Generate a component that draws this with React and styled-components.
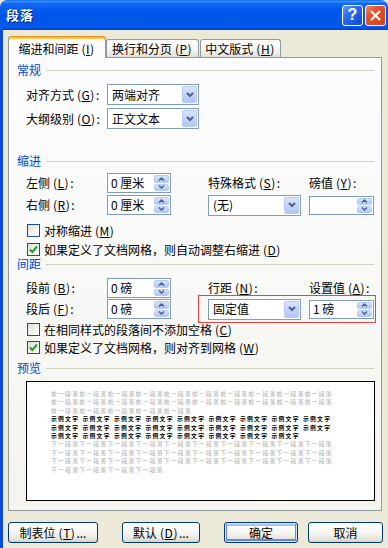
import React from "react";
import styled, { createGlobalStyle } from "styled-components";

const GlobalStyle = createGlobalStyle`
  * { box-sizing: border-box; }
  html, body {
    margin: 0;
    padding: 0;
    background: #ece9d8;
  }
  body {
    font-family: "Noto Sans CJK SC", "Noto Sans", sans-serif;
    font-size: 12px;
    color: #000;
  }
`;

const Window = styled.div`
  width: 388px;
  height: 548px;
  display: flex;
  flex-direction: column;
  overflow: hidden;
`;

const TitleBar = styled.div`
  height: 30px;
  flex-shrink: 0;
  display: flex;
  align-items: center;
  justify-content: space-between;
  padding: 0 2px 0 6px;
  border-radius: 7px 7px 0 0;
  background: linear-gradient(
    180deg,
    #0a5fe6 0%,
    #3d94ff 4%,
    #1168f4 12%,
    #0058ee 35%,
    #0055e6 70%,
    #005bf2 88%,
    #0040c4 100%
  );
`;

const Title = styled.div`
  color: #fff;
  font-weight: bold;
  font-size: 13px;
  line-height: 16px;
  letter-spacing: 1px;
  text-shadow: 1px 1px 0 #0a1883;
`;

const TitleButtons = styled.div`
  display: flex;
  gap: 2px;
`;

const TitleButton = styled.div`
  width: 21px;
  height: 21px;
  border: 1px solid #fff;
  border-radius: 3px;
  display: flex;
  align-items: center;
  justify-content: center;
  color: #fff;
  font-family: "Liberation Sans", sans-serif;
  font-weight: bold;
  font-size: 16px;
  line-height: 1;
  background: ${(p) =>
    p.$close
      ? "linear-gradient(135deg, #f0876a 0%, #e0552f 35%, #c9421c 100%)"
      : "linear-gradient(135deg, #6a9cf8 0%, #2d6df0 35%, #0c48d6 100%)"};
`;

const Body = styled.div`
  flex: 1;
  display: flex;
  flex-direction: column;
  background: #ece9d8;
  border-left: 3px solid #0b4ad8;
  padding: 6px 0 0 5px;
`;

const TabRow = styled.div`
  display: flex;
  align-items: flex-end;
  height: 22px;
  margin-bottom: -1px;
  position: relative;
  z-index: 1;
`;

const Tab = styled.div`
  width: ${(p) => p.$width}px;
  margin-left: ${(p) => p.$ml || 0}px;
  height: ${(p) => (p.$active ? 22 : 18)}px;
  margin-bottom: ${(p) => (p.$active ? 0 : 1)}px;
  display: flex;
  align-items: center;
  justify-content: center;
  line-height: 14px;
  white-space: nowrap;
  border: 1px solid #919b9c;
  border-bottom: none;
  border-radius: 3px 3px 0 0;
  background: ${(p) =>
    p.$active
      ? "#fcfcfe"
      : "linear-gradient(180deg, #ffffff 0%, #f4f4f0 60%, #e4e2d8 100%)"};
  ${(p) =>
    p.$active &&
    `
      border-top: 1px solid #e68b2c;
      box-shadow: inset 0 2px 0 #ffc83c;
      padding-top: 2px;
    `}
`;

const Panel = styled.div`
  position: relative;
  width: 374px;
  height: 454px;
  border: 1px solid #919b9c;
  background: linear-gradient(180deg, #fcfcfe 0%, #f8f8f6 55%, #f4f3ee 100%);
  padding: 0 7px 0 8px;
  display: flex;
  flex-direction: column;
`;

const SectionHeading = styled.div`
  display: flex;
  align-items: center;
  gap: 5px;
  height: 14px;
  line-height: 14px;
  color: #0046d5;
  margin-top: ${(p) => p.$mt}px;

  &::after {
    content: "";
    flex: 1;
    height: 1px;
    background: #d0d0bf;
  }
`;

const FieldGrid = styled.div`
  display: grid;
  grid-template-columns: 81px 101px 101px 64px;
  grid-auto-rows: ${(p) => p.$row}px;
  row-gap: ${(p) => p.$gap}px;
  margin: ${(p) => p.$mt}px 0 0 9px;
  align-items: center;
`;

const Label = styled.div`
  line-height: 20px;
  white-space: nowrap;
  grid-column: ${(p) => p.$col || "auto"};
  grid-row: ${(p) => p.$row || "auto"};
`;

const Paren = styled.span`
  padding: 0 1px 0 3px;
  letter-spacing: 0.5px;

  u {
    text-decoration: underline;
  }
`;

const Mn = ({ k }) => (
  <Paren>
    (<u>{k}</u>)
  </Paren>
);

const Field = styled.div`
  grid-column: ${(p) => p.$col || "auto"};
  grid-row: ${(p) => p.$row || "auto"};
  width: ${(p) => p.$width}px;
  height: ${(p) => p.$height || 20}px;
  border: 1px solid #7f9db9;
  background: #fff;
  display: flex;
  align-items: center;
  padding-left: ${(p) => p.$pad || 4}px;
  line-height: 14px;
  white-space: nowrap;
`;

const FieldText = styled.span`
  flex: 1;
`;

const DropButton = styled.div`
  width: 15px;
  align-self: stretch;
  margin: 1px;
  border-radius: 2px;
  border: 1px solid #b7c9f6;
  background: linear-gradient(180deg, #d9e4fd 0%, #c3d4fc 45%, #b2c7f8 100%);
  display: flex;
  align-items: center;
  justify-content: center;
`;

const SpinBox = styled.div`
  width: 15px;
  align-self: stretch;
  margin: 1px;
  display: flex;
  flex-direction: column;
  gap: 1px;
`;

const SpinHalf = styled.div`
  flex: 1;
  border-radius: 2px;
  border: 1px solid #b7c9f6;
  background: linear-gradient(180deg, #d9e4fd 0%, #c3d4fc 50%, #b2c7f8 100%);
  display: flex;
  align-items: center;
  justify-content: center;
`;

const CheckRow = styled.div`
  display: flex;
  align-items: center;
  gap: 4px;
  height: 13px;
  margin: ${(p) => p.$mt}px 0 0 10px;
  line-height: 13px;
  white-space: nowrap;
`;

const CheckBox = styled.div`
  width: 13px;
  height: 13px;
  flex-shrink: 0;
  border: 1px solid #1c5180;
  background: linear-gradient(135deg, #dcdcd7 0%, #f4f4f1 60%, #ffffff 100%);
  display: flex;
  align-items: center;
  justify-content: center;
`;

const Highlight = styled.div`
  position: absolute;
  left: 189px;
  top: 237px;
  width: 178px;
  height: 28px;
  border: 1px solid #e8413f;
  pointer-events: none;
`;

const Preview = styled.div`
  width: 349px;
  height: 120px;
  margin: 6px 0 0 9px;
  border: 1px solid #000;
  background: #fff;
  padding: 8px 0 0 24px;
  font-size: 5.8px;
  letter-spacing: 1.25px;
  line-height: 8.4px;
`;

const PreviewLine = styled.div`
  white-space: nowrap;
  height: 8.4px;
  color: ${(p) => (p.$sample ? "#000" : "#a9a9a9")};
  font-weight: ${(p) => (p.$sample ? 700 : 400)};
`;

const Word = styled.span`
  display: inline-block;
  margin-right: 3.3px;
`;

const ButtonRow = styled.div`
  display: flex;
  margin-top: 11px;
`;

const PushButton = styled.div`
  width: ${(p) => p.$width}px;
  margin-left: ${(p) => p.$ml || 0}px;
  height: 21px;
  border: 1px solid #003c74;
  border-radius: 3px;
  display: flex;
  align-items: center;
  justify-content: center;
  line-height: 14px;
  white-space: nowrap;
  background: linear-gradient(180deg, #ffffff 0%, #f4f4f0 55%, #e6e3da 85%, #d6d0c5 100%);
  ${(p) =>
    p.$default &&
    `
      box-shadow: inset 0 0 0 1px #cee7ff, inset 0 -1px 0 2px #6982ee, inset 0 1px 0 2px #a8c4f5;
    `}
`;

const ComboArrow = () => (
  <svg width="8" height="6" viewBox="0 0 8 6">
    <polyline points="1,1 4,4 7,1" fill="none" stroke="#4d6185" strokeWidth="2" />
  </svg>
);

const SpinArrow = ({ up }) => (
  <svg width="7" height="4" viewBox="0 0 7 4">
    <polyline
      points={up ? "1,3.5 3.5,1 6,3.5" : "1,0.5 3.5,3 6,0.5"}
      fill="none"
      stroke="#4d6185"
      strokeWidth="1.5"
    />
  </svg>
);

const Combo = ({ width, col, row, children }) => (
  <Field $width={width} $col={col} $row={row} $height={21}>
    <FieldText>{children}</FieldText>
    <DropButton>
      <ComboArrow />
    </DropButton>
  </Field>
);

const Spinner = ({ width, col, row, children, height }) => (
  <Field $width={width} $col={col} $row={row} $pad={3} $height={height}>
    <FieldText>{children}</FieldText>
    <SpinBox>
      <SpinHalf>
        <SpinArrow up />
      </SpinHalf>
      <SpinHalf>
        <SpinArrow />
      </SpinHalf>
    </SpinBox>
  </Field>
);

const Check = ({ checked, mt, children }) => (
  <CheckRow $mt={mt}>
    <CheckBox>
      {checked && (
        <svg width="9" height="9" viewBox="0 0 9 9">
          <polyline points="1,4.5 3.3,7 8,1.5" fill="none" stroke="#21a121" strokeWidth="2" />
        </svg>
      )}
    </CheckBox>
    <span>{children}</span>
  </CheckRow>
);

const before = [10, 10, 5];
const sample = [9, 9, 8];
const after = [10, 10, 10, 4];

function App() {
  return (
    <>
      <GlobalStyle />
      <Window>
        <TitleBar>
          <Title>段落</Title>
          <TitleButtons>
            <TitleButton>?</TitleButton>
            <TitleButton $close>
              <svg width="13" height="13" viewBox="0 0 13 13">
                <path d="M2 2 L11 11 M11 2 L2 11" stroke="#fff" strokeWidth="2.2" />
              </svg>
            </TitleButton>
          </TitleButtons>
        </TitleBar>
        <Body>
          <TabRow>
            <Tab $active $width={98}>
              缩进和间距<Mn k="I" />
            </Tab>
            <Tab $width={93}>
              换行和分页<Mn k="P" />
            </Tab>
            <Tab $width={81} $ml={1}>
              中文版式<Mn k="H" />
            </Tab>
          </TabRow>
          <Panel>
            <SectionHeading $mt={5}>常规</SectionHeading>
            <FieldGrid $row={21} $gap={3} $mt={7}>
              <Label>
                对齐方式<Mn k="G" />:
              </Label>
              <Combo width={92}>两端对齐</Combo>
              <Label $row={2}>
                大纲级别<Mn k="O" />:
              </Label>
              <Combo width={92} row={2}>
                正文文本
              </Combo>
            </FieldGrid>

            <SectionHeading $mt={25}>缩进</SectionHeading>
            <FieldGrid $row={20} $gap={2} $mt={5}>
              <Label $col={1} $row={1}>
                左侧<Mn k="L" />:
              </Label>
              <Spinner width={64} col={2} row={1}>
                0 厘米
              </Spinner>
              <Label $col={3} $row={1}>
                特殊格式<Mn k="S" />:
              </Label>
              <Label $col={4} $row={1}>
                磅值<Mn k="Y" />:
              </Label>
              <Label $col={1} $row={2}>
                右侧<Mn k="R" />:
              </Label>
              <Spinner width={64} col={2} row={2}>
                0 厘米
              </Spinner>
              <Combo width={93} col={3} row={2}>
                (无)
              </Combo>
              <Spinner width={65} col={4} row={2} height={19} />
            </FieldGrid>
            <Check mt={9}>
              对称缩进<Mn k="M" />
            </Check>
            <Check checked mt={6}>
              如果定义了文档网格，则自动调整右缩进<Mn k="D" />
            </Check>

            <SectionHeading $mt={1}>间距</SectionHeading>
            <FieldGrid $row={20} $gap={1} $mt={7}>
              <Label $col={1} $row={1}>
                段前<Mn k="B" />:
              </Label>
              <Spinner width={64} col={2} row={1}>
                0 磅
              </Spinner>
              <Label $col={3} $row={1}>
                行距<Mn k="N" />:
              </Label>
              <Label $col={4} $row={1}>
                设置值<Mn k="A" />:
              </Label>
              <Label $col={1} $row={2}>
                段后<Mn k="F" />:
              </Label>
              <Spinner width={64} col={2} row={2}>
                0 磅
              </Spinner>
              <Combo width={93} col={3} row={2}>
                固定值
              </Combo>
              <Spinner width={65} col={4} row={2} height={19}>
                1 磅
              </Spinner>
            </FieldGrid>
            <Check mt={4}>
              在相同样式的段落间不添加空格<Mn k="C" />
            </Check>
            <Check checked mt={5}>
              如果定义了文档网格，则对齐到网格<Mn k="W" />
            </Check>

            <SectionHeading $mt={7}>预览</SectionHeading>
            <Preview>
              {before.map((n, i) => (
                <PreviewLine key={"b" + i}>{"前一段落".repeat(n)}</PreviewLine>
              ))}
              {sample.map((n, i) => (
                <PreviewLine key={"s" + i} $sample>
                  {Array.from({ length: n }).map((_, j) => (
                    <Word key={j}>示例文字</Word>
                  ))}
                </PreviewLine>
              ))}
              {after.map((n, i) => (
                <PreviewLine key={"a" + i}>{"下一段落".repeat(n)}</PreviewLine>
              ))}
            </Preview>
            <Highlight />
          </Panel>
          <ButtonRow>
            <PushButton $width={90}>
              制表位<Mn k="T" />...
            </PushButton>
            <PushButton $width={78} $ml={24}>
              默认<Mn k="D" />...
            </PushButton>
            <PushButton $width={74} $ml={24} $default>
              确定
            </PushButton>
            <PushButton $width={75} $ml={10}>
              取消
            </PushButton>
          </ButtonRow>
        </Body>
      </Window>
    </>
  );
}

export default App;
